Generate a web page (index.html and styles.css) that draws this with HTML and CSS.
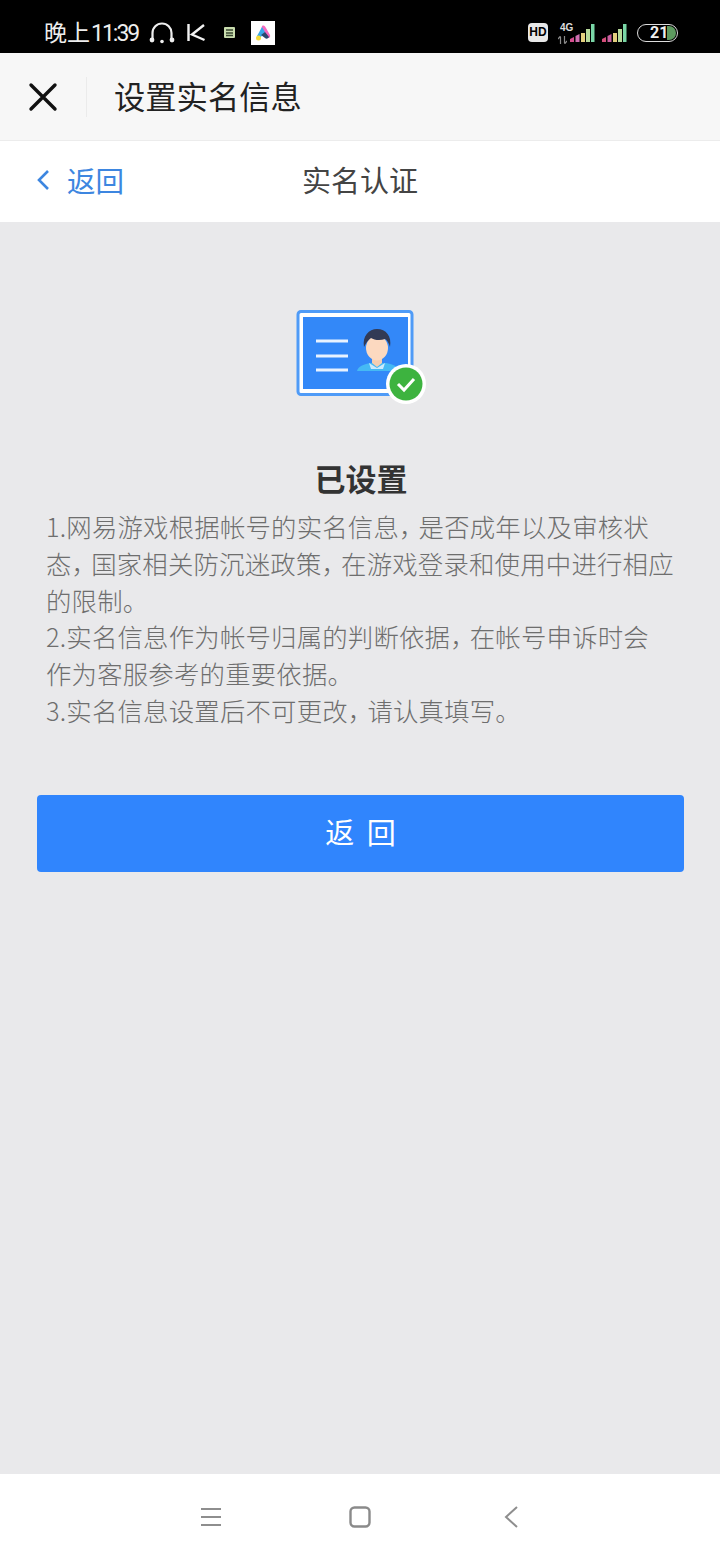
FILE: index.html
```html
<!DOCTYPE html>
<html lang="zh-CN">
<head>
    <meta charset="UTF-8">
    <meta name="viewport" content="width=device-width, initial-scale=1.0">
    <title>实名认证</title>
    <link rel="stylesheet" href="styles.css">
</head>
<body>
    <div class="status">
        <div class="status-left">
            <span class="time">晚上<span class="time-num">11:39</span></span>
            <svg class="ico-head" width="26" height="22" viewBox="0 0 26 22"><path d="M3.500 18V11a9.500 9.500 0 0 1 19 0v7" fill="none" stroke="#eee" stroke-width="2.200"/><circle cx="3" cy="18" r="2.400" fill="#eee"/><circle cx="23" cy="18" r="2.400" fill="#eee"/><circle cx="13" cy="19.500" r="1.800" fill="#eee"/></svg>
            <svg class="ico-k" width="18" height="18" viewBox="0 0 18 18"><path d="M1.500 0v17M17 1 5 10.500 17.500 16" fill="none" stroke="#f2f2f2" stroke-width="2.400"/></svg>
            <svg class="ico-note" width="11" height="11" viewBox="0 0 11 11"><rect width="11" height="11" rx="1" fill="#c9dcae"/><path d="M2 3h7M2 6h7M2 8.500h7" stroke="#37452f" stroke-width="1.300"/></svg>
            <div class="app-tile">
                <svg width="18" height="16" viewBox="0 0 18 16"><path d="M8 1c2-1 3 0 4 2l4 7c1 3-2 4-4 2L7 6z" fill="#f56bc0"/><path d="M3 11 8 2l3 5-5 6z" fill="#38a9ea"/><path d="M7 10l4-3 4 5c-1 2-3 2-4 1z" fill="#29486e"/><circle cx="4.500" cy="13" r="2.500" fill="#f4dc3c"/></svg>
            </div>
        </div>
        <div class="status-right">
            <span class="hd">HD</span>
            <div class="net">
                <span class="net-label">4G</span>
                <svg class="net-arrows" width="9" height="8" viewBox="0 0 9 8"><path d="M2.500 8V1M0 3l2.500-3M6.500 0v7M6.500 8 9 5" fill="none" stroke="#8a8a8a" stroke-width="1.200"/></svg>
                <svg class="net-bars" width="25" height="18" viewBox="0 0 25 18"><path d="M21 0h3.500v18H21z" fill="#79d6a6"/><path d="M0 15l4-2v5H0z" fill="#d64f8f"/><path d="M5.500 12l4-2v8h-4z" fill="#cf6fb0"/><path d="M11 9h4v9h-4z" fill="#e3cf7e"/><path d="M16 5h4v13h-4z" fill="#b7d99a"/></svg>
            </div>
            <svg class="bars2" width="25" height="18" viewBox="0 0 25 18"><path d="M21 0h3.500v18H21z" fill="#79d6a6"/><path d="M0 15l4-2v5H0z" fill="#d64f7b"/><path d="M5.500 12l4-2v8h-4z" fill="#c85fa0"/><path d="M11 9h4v9h-4z" fill="#e3cf7e"/><path d="M16 5h4v13h-4z" fill="#b7d99a"/></svg>
            <div class="battery">
                <span class="battery-num">21</span>
                <span class="battery-fill"></span>
            </div>
        </div>
    </div>

    <div class="header">
        <svg class="close" width="30" height="30" viewBox="0 0 30 30"><path d="M3 3l24 24M27 3 3 27" stroke="#111" stroke-width="3.400" stroke-linecap="round"/></svg>
        <span class="header-line"></span>
        <span class="header-title">设置实名信息</span>
    </div>

    <div class="nav">
        <a class="nav-back">
            <svg width="14" height="22" viewBox="0 0 14 22"><path d="M12 2 3 11l9 9" fill="none" stroke="#3d86e0" stroke-width="2.600"/></svg>
            <span>返回</span>
        </a>
        <span class="nav-title">实名认证</span>
    </div>

    <div class="content">
        <svg class="card" width="130" height="94" viewBox="0 0 130 94">
            <rect x="2" y="1.500" width="114" height="83" rx="3" fill="#fff" stroke="#4f9bf7" stroke-width="3"/>
            <rect x="7" y="7" width="105" height="72" fill="#3388f8"/>
            <path d="M20 31h32M20 46h32M20 60h32" stroke="#e8f2ff" stroke-width="3"/>
            <path d="M61 61c1-5 8-7 13-8h16c6 1 12 3 13 8z" fill="#45b9f4"/>
            <path d="M73 53l8 5 8-5-2 6H75z" fill="#cdeafc"/>
            <path d="M76 44h10v9l-5 4-5-4z" fill="#f5cdb2"/>
            <ellipse cx="81" cy="38" rx="11" ry="12.500" fill="#fcd9c0"/>
            <path d="M68 37c-2-11 5-18 13-18 9 0 15 7 13 18-1-4-3-7-5-8-5 2-11 1-14-1-3 2-5 5-7 9z" fill="#323a55"/>
            <circle cx="110" cy="74" r="20" fill="#fff"/>
            <circle cx="110" cy="74" r="16.500" fill="#3db33f"/>
            <path d="M102 74l6 6 10-11" fill="none" stroke="#fff" stroke-width="3"/>
        </svg>
        <h2 class="done-title">已设置</h2>
        <p class="desc">1.网易游戏根据帐号的实名信息<span class="comma">，</span>是否成年以及审核状<br>态<span class="comma">，</span>国家相关防沉迷政策<span class="comma">，</span>在游戏登录和使用中进行相应<br>的限制。<br>2.实名信息作为帐号归属的判断依据<span class="comma">，</span>在帐号申诉时会<br>作为客服参考的重要依据。<br>3.实名信息设置后不可更改<span class="comma">，</span>请认真填写。</p>
        <button class="back-btn"><span>返 回</span></button>
    </div>

    <div class="softkeys">
        <svg width="22" height="20" viewBox="0 0 22 20"><path d="M1 2h20M1 10h20M1 18h20" stroke="#8e8e8e" stroke-width="2"/></svg>
        <svg width="22" height="22" viewBox="0 0 22 22"><rect x="1.500" y="1.500" width="19" height="19" rx="4" fill="none" stroke="#8a8a8a" stroke-width="2.400"/></svg>
        <svg class="softkey-back" width="14" height="22" viewBox="0 0 14 22"><path d="M13 1 2 11l11 10" fill="none" stroke="#8e8e8e" stroke-width="2"/></svg>
    </div>
</body>
</html>
```

FILE: styles.css
```css
* {
    box-sizing: border-box;
}
body {
    margin: 0;
    width: 720px;
    height: 1560px;
    display: flex;
    flex-direction: column;
    font-family: "Noto Sans CJK SC", "Liberation Sans", sans-serif;
    background: #e9e9eb;
}

/* status bar */
.status {
    height: 53px;
    background: #000;
    display: flex;
    justify-content: space-between;
    align-items: center;
    padding: 12px 42px 0 44px;
    color: #eee;
    flex-shrink: 0;
}
.status-left,
.status-right {
    display: flex;
    align-items: center;
}
.time {
    font-size: 23px;
    line-height: 30px;
}
.time-num {
    font-family: "Roboto", sans-serif;
    font-size: 23px;
    letter-spacing: -2px;
    margin-left: 1px;
}
.ico-head {
    margin-left: 11px;
}
.ico-k {
    margin-left: 12px;
}
.ico-note {
    margin-left: 19px;
}
.app-tile {
    width: 24px;
    height: 24px;
    margin-left: 16px;
    background: #fff;
    display: flex;
    align-items: center;
    justify-content: center;
}
.hd {
    width: 20px;
    height: 19px;
    background: #e8e8e8;
    color: #000;
    border-radius: 4px;
    font: bold 12px "Liberation Sans", sans-serif;
    line-height: 19px;
    text-align: center;
}
.net {
    position: relative;
    width: 37px;
    height: 20px;
    margin-left: 10px;
}
.net-label {
    position: absolute;
    left: 2px;
    top: -1px;
    font: bold 10px "Liberation Sans", sans-serif;
    color: #ddd;
}
.net-arrows {
    position: absolute;
    left: 0;
    bottom: -1px;
}
.net-bars {
    position: absolute;
    right: 0;
    bottom: 1px;
}
.bars2 {
    margin-left: 7px;
}
.battery {
    position: relative;
    width: 41px;
    height: 18px;
    margin-left: 10px;
    border: 1.500px solid #ddd;
    border-radius: 9px;
}
.battery-num {
    position: absolute;
    left: 12px;
    top: -3px;
    font: bold 16px "Roboto", sans-serif;
    line-height: 21px;
    color: #eee;
}
.battery-fill {
    position: absolute;
    right: 1px;
    top: 1px;
    bottom: 1px;
    width: 9px;
    background: #5d9a5f;
    border-radius: 0 7px 7px 0;
}

/* page header */
.header {
    height: 88px;
    background: #f7f7f7;
    border-bottom: 1px solid #ececec;
    display: flex;
    align-items: center;
    padding-left: 28px;
    flex-shrink: 0;
}
.header-line {
    width: 1px;
    height: 40px;
    background: #ebebeb;
    margin-left: 28px;
}
.header-title {
    margin-left: 27px;
    padding-bottom: 2px;
    font-size: 31.300px;
    color: #222;
}

.nav {
    position: relative;
    height: 81px;
    background: #fff;
    display: flex;
    align-items: center;
    justify-content: center;
    padding-bottom: 5px;
    flex-shrink: 0;
}
.nav-back {
    position: absolute;
    left: 36px;
    top: 18px;
    display: flex;
    align-items: center;
    gap: 17px;
    font-size: 28.500px;
    color: #3d86e0;
}
.nav-title {
    font-size: 29px;
    color: #444;
}

/* main */
.content {
    flex: 1;
    padding: 88px 36px 0;
    display: flex;
    flex-direction: column;
    align-items: center;
}
.card {
    margin-left: 2px;
}
.done-title {
    margin: 53px 0 0 2px;
    font-size: 31px;
    line-height: 42px;
    font-weight: bold;
    color: #333;
}
.desc {
    margin: 9px 0 0;
    align-self: flex-start;
    padding-left: 10px;
    width: 648px;
    font-size: 25.400px;
    font-weight: 300;
    letter-spacing: 0.200px;
    line-height: 36.800px;
    color: #6e6e6e;
}
.comma {
    font-feature-settings: "halt";
    margin-right: 6.700px;
}
.back-btn {
    width: 647px;
    height: 77px;
    margin: 66px 0 0 1px;
    padding: 0 0 5px;
    border: none;
    border-radius: 4px;
    background: #3085fd;
    color: #fff;
    font-family: inherit;
    font-size: 29px;
    word-spacing: 6px;
}

.softkeys {
    height: 86px;
    background: #fff;
    display: flex;
    align-items: center;
    padding: 0 0 0 200px;
    gap: 127px;
    flex-shrink: 0;
}
.softkey-back {
    margin-left: 6px;
}
```
